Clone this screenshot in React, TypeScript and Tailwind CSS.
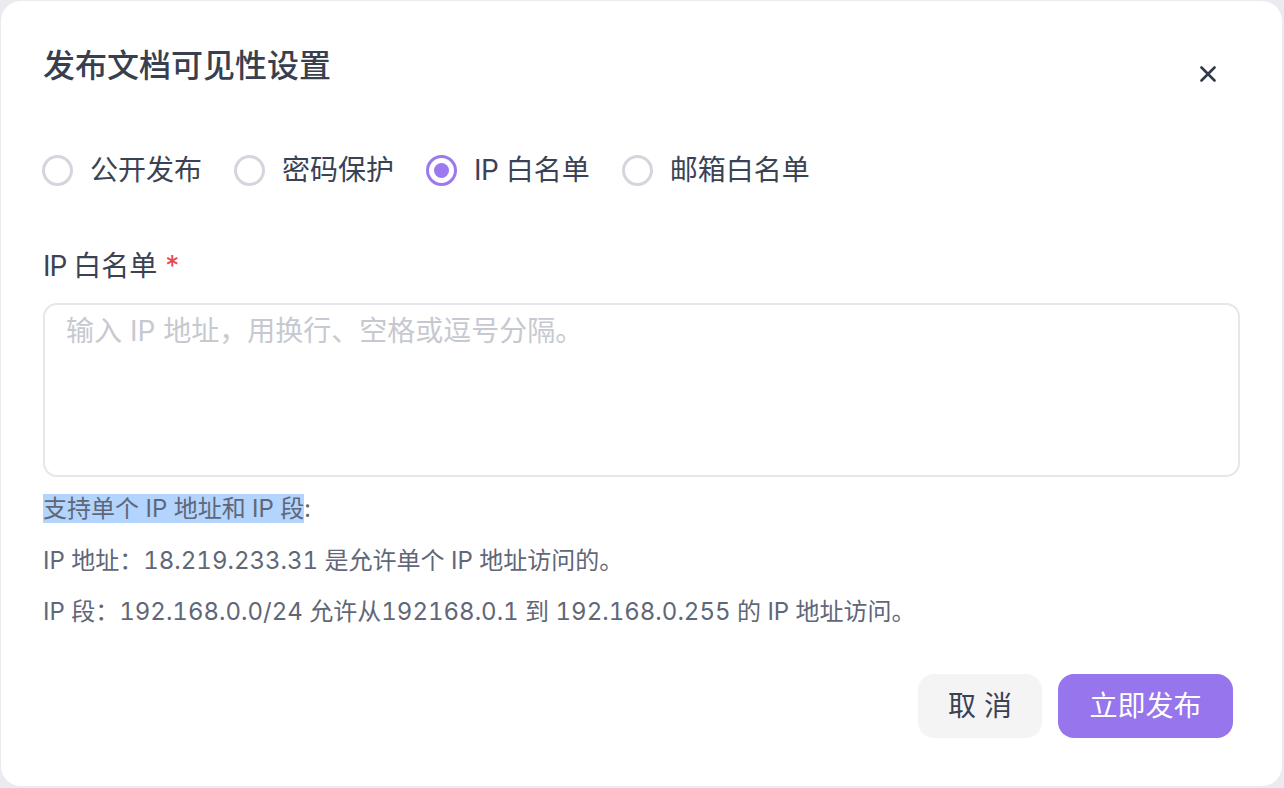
import React from "react";

const FONT = { fontFamily: 'Inter, "Noto Sans CJK SC", sans-serif' };

function Radio({ label, checked }: { label: React.ReactNode; checked?: boolean }) {
  return (
    <div className="flex items-center gap-[17px]">
      <div
        className={
          checked
            ? "w-[31px] h-[31px] rounded-full border-[3px] border-[#9a7aee] flex items-center justify-center"
            : "w-[31px] h-[31px] rounded-full border-[3px] border-[#d3d6dd]"
        }
      >
        {checked && <div className="w-[15px] h-[15px] rounded-full bg-[#9a7aee]" />}
      </div>
      <span className="text-[28px] leading-[40px] text-[#3a4253]">{label}</span>
    </div>
  );
}

export default function App() {
  return (
    <div
      className="w-[1284px] h-[788px] bg-[#ebebef] pt-px pl-px pr-[2px] pb-[2px]"
      style={FONT}
    >
      <div className="w-full h-full bg-white rounded-[20px] pt-[43px] px-[42px] flex flex-col">
        <div className="flex justify-between items-start">
          <h1 className="text-[32px] leading-[44px] font-medium text-[#383f4f]">
            发布文档可见性设置
          </h1>
          <button className="mt-[22px] mr-[24px] w-[16px] h-[16px]">
            <svg width="16" height="16" viewBox="0 0 16 16" fill="none">
              <path
                d="M1.5 1.5L14.5 14.5M14.5 1.5L1.5 14.5"
                stroke="#2f3a4d"
                strokeWidth="2.6"
                strokeLinecap="round"
              />
            </svg>
          </button>
        </div>

        <div className="mt-[62px] ml-[-1px] flex items-center gap-[32px]">
          <Radio label="公开发布" />
          <Radio label="密码保护" />
          <Radio
            label={
              <>
                <span className="tracking-[-0.5px]">IP </span>白名单
              </>
            }
            checked
          />
          <Radio label="邮箱白名单" />
        </div>

        <div className="mt-[56px] text-[28px] leading-[40px] text-[#3a4253]">
          <span className="tracking-[-1px]">IP </span>白名单 <span className="text-[#e5484d]">*</span>
        </div>

        <div className="mt-[17px] h-[174px] border-2 border-[#e6e6ec] rounded-[14px] px-[21px] pt-[6px]">
          <div className="text-[28px] leading-[40px] text-[#c6c9d0]">
            输入 IP 地址，用换行、空格或逗号分隔。
          </div>
        </div>

        <div className="mt-[11px] text-[24px] leading-[42px] text-[#5f6778] tabular-nums">
          <span className="bg-[#b3d4fd]">支持单个 IP 地址和 IP 段</span>:
        </div>
        <div className="mt-[10px] text-[24px] leading-[42px] text-[#5f6778] tabular-nums">
          IP 地址：18.219.233.31 是允许单个 IP 地址访问的。
        </div>
        <div className="mt-[9px] text-[24px] leading-[42px] text-[#5f6778] tabular-nums">
          IP 段：192.168.0.0/24 允许从192168.0.1 到 192.168.0.255 的 IP 地址访问。
        </div>

        <div className="mt-[41px] flex justify-end gap-[16px] mr-[7px]">
          <button className="h-[64px] w-[124px] rounded-[16px] bg-[#f4f4f5] text-[28px] text-[#3a4253]">
            取 消
          </button>
          <button className="h-[64px] w-[175px] rounded-[16px] bg-[#9775ec] text-[28px] text-white">
            立即发布
          </button>
        </div>
      </div>
    </div>
  );
}
